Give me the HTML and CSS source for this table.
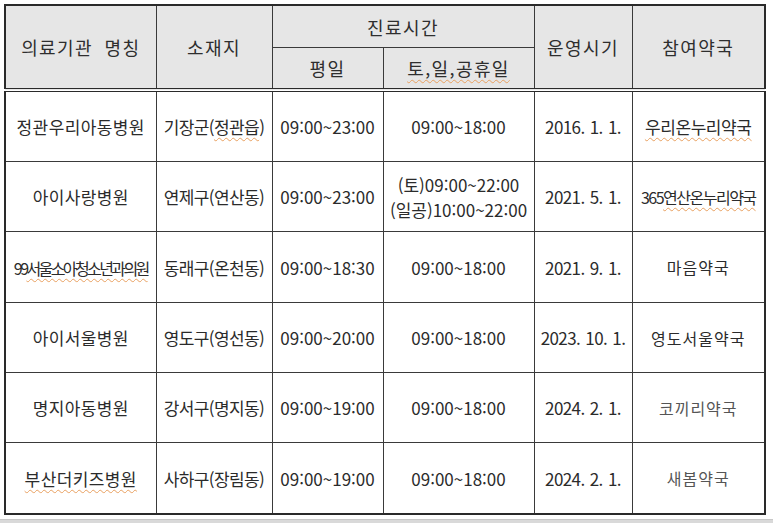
FILE: index.html
```html
<!DOCTYPE html>
<html lang="ko">
<head>
<meta charset="utf-8">
<title>야간·휴일 진료 의료기관</title>
<link rel="stylesheet" href="styles.css">
</head>
<body>
<div class="page">
  <table class="clinic-table">
    <colgroup>
      <col class="c1"><col class="c2"><col class="c3"><col class="c4"><col class="c5"><col class="c6">
    </colgroup>
    <thead>
      <tr class="h1">
        <th rowspan="2" class="hb">의료기관 명칭</th>
        <th rowspan="2" class="hb">소재지</th>
        <th colspan="2">진료시간</th>
        <th rowspan="2" class="hb">운영시기</th>
        <th rowspan="2" class="hb">참여약국</th>
      </tr>
      <tr class="h2">
        <th class="hb">평일</th>
        <th class="hb"><span class="spell">토,일,공휴일</span></th>
      </tr>
    </thead>
    <tbody>
      <tr>
        <td class="name">정관우리아동병원</td>
        <td class="loc">기장군(<span class="spell">정관읍</span>)</td>
        <td class="time">09:00~23:00</td>
        <td class="time">09:00~18:00</td>
        <td class="date">2016. 1. 1.</td>
        <td class="ph"><span class="spell">우리온누리약국</span></td>
      </tr>
      <tr>
        <td class="name">아이사랑병원</td>
        <td class="loc">연제구(연산동)</td>
        <td class="time">09:00~23:00</td>
        <td class="time two"><div class="line">(토)09:00~22:00</div><div class="line">(일공)10:00~22:00</div></td>
        <td class="date">2021. 5. 1.</td>
        <td class="ph"><span class="squeeze sq-ph">365<span class="spell">연산온누리약국</span></span></td>
      </tr>
      <tr class="tall">
        <td class="name"><span class="squeeze sq-name">99<span class="spell">서울소아청소년과의원</span></span></td>
        <td class="loc">동래구(온천동)</td>
        <td class="time">09:00~18:30</td>
        <td class="time">09:00~18:00</td>
        <td class="date">2021. 9. 1.</td>
        <td class="ph wide">마음약국</td>
      </tr>
      <tr>
        <td class="name">아이서울병원</td>
        <td class="loc">영도구(영선동)</td>
        <td class="time">09:00~20:00</td>
        <td class="time">09:00~18:00</td>
        <td class="date">2023. 10. 1.</td>
        <td class="ph wide">영도서울약국</td>
      </tr>
      <tr>
        <td class="name">명지아동병원</td>
        <td class="loc">강서구(명지동)</td>
        <td class="time">09:00~19:00</td>
        <td class="time">09:00~18:00</td>
        <td class="date">2024. 2. 1.</td>
        <td class="ph wide light">코끼리약국</td>
      </tr>
      <tr class="tall">
        <td class="name"><span class="spell">부산더키즈병원</span></td>
        <td class="loc">사하구(장림동)</td>
        <td class="time">09:00~19:00</td>
        <td class="time">09:00~18:00</td>
        <td class="date">2024. 2. 1.</td>
        <td class="ph wide light">새봄약국</td>
      </tr>
    </tbody>
  </table>
  <div class="bottom-strip"></div>
</div>
</body>
</html>
```

FILE: styles.css
```css
html, body {
  margin: 0;
  padding: 0;
  background: #ffffff;
}

body {
  font-family: "Noto Sans CJK KR", "Noto Sans", sans-serif;
  color: #2b2b2b;
}

.page {
  width: 773px;
  height: 523px;
  padding-top: 4px;
  box-sizing: border-box;
  display: flex;
  flex-direction: column;
  overflow: hidden;
}

.clinic-table {
  margin-left: 4px;
  width: 762px;
  border-collapse: collapse;
  table-layout: fixed;
  border: 2px solid #2a2a2a;
}

.c1 { width: 151px; }
.c2 { width: 116px; }
.c3 { width: 111px; }
.c4 { width: 151px; }
.c5 { width: 98px; }
.c6 { width: 133px; }

.clinic-table th,
.clinic-table td {
  border: 1px solid #3a3a3a;
  text-align: center;
  vertical-align: middle;
  padding: 0;
  white-space: nowrap;
}

.clinic-table th {
  background: #e6e6e6;
  font-weight: 400;
  font-size: 18px;
  letter-spacing: 1.4px;
  word-spacing: 5px;
  color: #2e2e2e;
}

.h1 th { height: 41px; }
.h2 th { height: 40px; }

.clinic-table th.hb {
  border-bottom: 4px double #2a2a2a;
}

.clinic-table td {
  height: 69px;
  font-size: 17px;
  color: #2b2b2b;
  font-weight: 400;
}

.clinic-table tr.tall td {
  height: 70px;
}

.name {
  font-size: 18px;
  letter-spacing: 0.4px;
}

.loc {
  color: #5c544c;
  font-size: 16px;
  letter-spacing: -0.6px;
}

.time {
  letter-spacing: 0;
}

.two .line {
  line-height: 25px;
}

.date {
  letter-spacing: -0.6px;
  word-spacing: 1px;
}

.ph {
  letter-spacing: -0.4px;
}

.ph.wide {
  font-size: 16px;
  letter-spacing: 1px;
}

.ph.light {
  color: #555555;
}

.spell {
  text-decoration: underline wavy #e8a060;
  text-decoration-thickness: 1px;
  text-underline-offset: 3px;
}

.squeeze {
  display: inline-block;
}

.sq-name {
  font-size: 16px;
  letter-spacing: -2.6px;
}

.sq-ph {
  font-size: 16px;
  letter-spacing: -1.5px;
}

.bottom-strip {
  margin-top: auto;
  height: 3px;
  background: #d9d9d9;
  border-top: 1px solid #c8c8c8;
}
```
